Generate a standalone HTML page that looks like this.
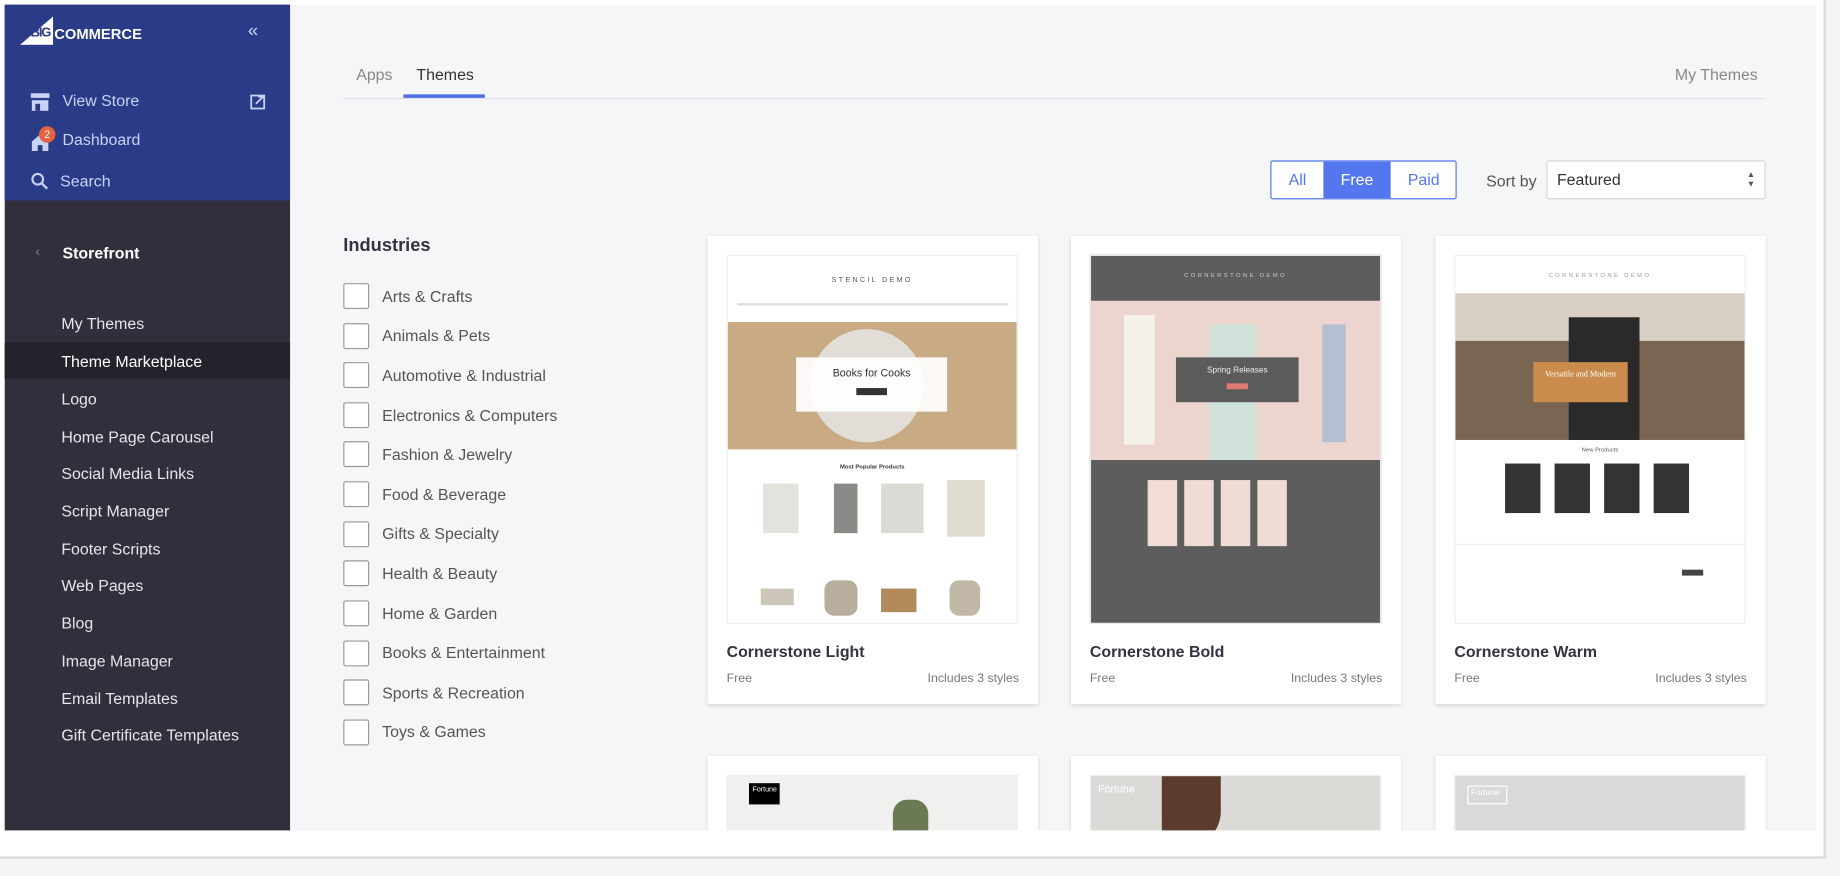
<!DOCTYPE html>
<html><head><meta charset="utf-8"><style>
*{box-sizing:border-box;margin:0;padding:0}
html,body{width:1840px;height:876px;overflow:hidden;background:#f4f4f4;font-family:"Liberation Sans",sans-serif}
#w{position:absolute;left:0;top:0;width:1560px;height:742px;overflow:hidden;transform:scale(1.1795);transform-origin:0 0}
.abs{position:absolute;white-space:nowrap}
#frame{left:0;top:0;width:1548px;height:728px;background:#fff;border-right:2px solid #dcdcdc;border-bottom:2px solid #dcdcdc}
#side{left:4px;top:4px;width:242px;height:700px;background:#302f3b}
#blue{left:4px;top:4px;width:242px;height:166px;background:#2a3b87}
.sn{position:absolute;color:#c9d2f7;font-size:13.5px;white-space:nowrap}
.mi{position:absolute;left:52px;color:#e6e6ec;font-size:13.5px;white-space:nowrap}
#main{left:246px;top:4px;width:1294px;height:700px;background:#f5f6f8;overflow:hidden}
.cb{position:absolute;left:45px;width:22px;height:22px;border:1px solid #9a9a9a;border-radius:2px;background:#fff}
.cl{position:absolute;left:78px;font-size:13.5px;color:#555;white-space:nowrap}
.card{position:absolute;width:280px;height:397px;background:#fff;box-shadow:0 1px 3px rgba(0,0,0,.15)}
.th{position:absolute;left:16px;top:16px;width:247px;height:313px;border:1px solid #eee;overflow:hidden}
.ct{position:absolute;left:16px;top:345px;font-size:13.5px;color:#313440;font-weight:bold;white-space:nowrap}
.cm{position:absolute;top:369px;font-size:10.5px;color:#777;white-space:nowrap}
</style></head><body><div id="w">
<div class="abs" id="frame"></div>
<div class="abs" id="side"></div>
<div class="abs" id="blue"></div>
<svg class="abs" style="left:17px;top:14px" width="34" height="24"><polygon points="0,24 28,0 28,24" fill="#fff"/></svg>
<div class="abs" style="left:26px;top:22px;font-size:11px;font-weight:bold;color:#2a3b87;letter-spacing:-1px">BIG</div>
<div class="abs" style="left:46px;top:22px;font-size:12.5px;color:#fff;font-weight:bold">COMMERCE</div>
<div class="abs" style="left:210px;top:18px;font-size:16px;color:#c9d2f7">«</div>
<svg class="abs" style="left:26px;top:79px" width="16" height="15"><rect x="0" y="0" width="16" height="4" fill="#c9d2f7"/><rect x="1" y="6" width="14" height="9" fill="#c9d2f7"/><rect x="4" y="9" width="4" height="6" fill="#2a3b87"/></svg>
<div class="sn" style="left:53px;top:78px">View Store</div>
<svg class="abs" style="left:212px;top:80px" width="13" height="13"><rect x="1" y="1" width="11" height="11" fill="none" stroke="#c9d2f7" stroke-width="1.5"/><path d="M5 8L11 2M7 2h5v5" stroke="#c9d2f7" stroke-width="1.5" fill="none"/></svg>
<svg class="abs" style="left:26px;top:112px" width="16" height="16"><path d="M1 8L8 2L15 8V16H10V11H6V16H1Z" fill="#c9d2f7"/></svg>
<div class="abs" style="left:33px;top:107px;width:14px;height:14px;border-radius:50%;background:#e4623f;color:#fff;font-size:9px;text-align:center;line-height:14px">2</div>
<div class="sn" style="left:53px;top:111px">Dashboard</div>
<svg class="abs" style="left:26px;top:146px" width="16" height="16"><circle cx="6" cy="6" r="4.5" fill="none" stroke="#c9d2f7" stroke-width="1.8"/><path d="M9.5 9.5L14 14" stroke="#c9d2f7" stroke-width="2"/></svg>
<div class="sn" style="left:51px;top:146px">Search</div>
<div class="abs" style="left:30px;top:206px;color:#888;font-size:12px">‹</div>
<div class="abs" style="left:53px;top:207px;color:#fff;font-size:13.5px;font-weight:bold">Storefront</div>
<div class="abs" style="left:4px;top:290px;width:242px;height:31px;background:#24232c"></div>
<div class="mi" style="top:267px">My Themes</div>
<div class="mi" style="top:299px;color:#fff">Theme Marketplace</div>
<div class="mi" style="top:331px">Logo</div>
<div class="mi" style="top:363px">Home Page Carousel</div>
<div class="mi" style="top:394px">Social Media Links</div>
<div class="mi" style="top:426px">Script Manager</div>
<div class="mi" style="top:458px">Footer Scripts</div>
<div class="mi" style="top:489px">Web Pages</div>
<div class="mi" style="top:521px">Blog</div>
<div class="mi" style="top:553px">Image Manager</div>
<div class="mi" style="top:585px">Email Templates</div>
<div class="mi" style="top:616px">Gift Certificate Templates</div>
<div class="abs" id="main">
<div class="abs" style="left:56px;top:52px;font-size:13.5px;color:#888">Apps</div>
<div class="abs" style="left:107px;top:52px;font-size:13.5px;color:#333">Themes</div>
<div class="abs" style="left:45px;top:79px;width:1206px;height:1px;background:#e1e3e8"></div>
<div class="abs" style="left:96px;top:76px;width:69px;height:3px;background:#4f6fe6"></div>
<div class="abs" style="left:1174px;top:52px;font-size:13.5px;color:#888">My Themes</div>
<div class="abs" style="left:831px;top:132px;width:158px;height:33px;border:1px solid #5477f0;border-radius:2px;background:#fff;overflow:hidden;font-size:13.5px;color:#5477f0">
<div class="abs" style="left:0;top:0;width:44px;height:31px;line-height:31px;text-align:center">All</div>
<div class="abs" style="left:44px;top:0;width:57px;height:31px;line-height:31px;text-align:center;background:#5477f0;color:#fff">Free</div>
<div class="abs" style="left:101px;top:0;width:56px;height:31px;line-height:31px;text-align:center">Paid</div></div>
<div class="abs" style="left:1014px;top:142px;font-size:13.5px;color:#555">Sort by</div>
<div class="abs" style="left:1065px;top:132px;width:186px;height:33px;border:1px solid #d5d7dc;background:#fff;border-radius:2px;font-size:13.5px;color:#333;line-height:31px;padding-left:8px">Featured<span style="position:absolute;right:8px;top:0;font-size:7px;line-height:8px;padding-top:8px;color:#555">▲<br>▼</span></div>
<div class="abs" style="left:45px;top:196px;font-size:15.5px;font-weight:bold;color:#313440">Industries</div>
<div class="cb" style="top:236px"></div><div class="cl" style="top:240px">Arts &amp; Crafts</div>
<div class="cb" style="top:270px"></div><div class="cl" style="top:273px">Animals &amp; Pets</div>
<div class="cb" style="top:303px"></div><div class="cl" style="top:307px">Automotive &amp; Industrial</div>
<div class="cb" style="top:337px"></div><div class="cl" style="top:341px">Electronics &amp; Computers</div>
<div class="cb" style="top:370px"></div><div class="cl" style="top:374px">Fashion &amp; Jewelry</div>
<div class="cb" style="top:404px"></div><div class="cl" style="top:408px">Food &amp; Beverage</div>
<div class="cb" style="top:438px"></div><div class="cl" style="top:441px">Gifts &amp; Specialty</div>
<div class="cb" style="top:471px"></div><div class="cl" style="top:475px">Health &amp; Beauty</div>
<div class="cb" style="top:505px"></div><div class="cl" style="top:509px">Home &amp; Garden</div>
<div class="cb" style="top:539px"></div><div class="cl" style="top:542px">Books &amp; Entertainment</div>
<div class="cb" style="top:572px"></div><div class="cl" style="top:576px">Sports &amp; Recreation</div>
<div class="cb" style="top:606px"></div><div class="cl" style="top:609px">Toys &amp; Games</div>

<div class="card" style="left:354px;top:196px"><div class="th" style="background:#fff">
<div class="abs" style="left:0;top:18px;width:100%;text-align:center;font-size:6px;letter-spacing:2px;color:#555">STENCIL DEMO</div>
<div class="abs" style="left:8px;top:40px;width:230px;height:2px;background:#ddd"></div>
<div class="abs" style="left:0;top:56px;width:100%;height:108px;background:#c8aa85"></div>
<div class="abs" style="left:70px;top:62px;width:96px;height:96px;border-radius:50%;background:#e2ddd6"></div>
<div class="abs" style="left:58px;top:86px;width:128px;height:46px;background:rgba(255,255,255,.92);text-align:center;font-size:9px;color:#333;padding-top:8px">Books for Cooks<div style="margin:8px auto 0;width:26px;height:6px;background:#333"></div></div>
<div class="abs" style="left:0;top:176px;width:100%;text-align:center;font-size:5px;color:#333;font-weight:bold">Most Popular Products</div>
<div class="abs" style="left:30px;top:193px;width:30px;height:42px;background:#e4e2dd"></div>
<div class="abs" style="left:90px;top:193px;width:20px;height:42px;background:#8a8a86"></div>
<div class="abs" style="left:130px;top:193px;width:36px;height:42px;background:#dcdad4"></div>
<div class="abs" style="left:186px;top:190px;width:32px;height:48px;background:#e0ddd0"></div>
<div class="abs" style="left:28px;top:282px;width:28px;height:14px;background:#ccc6b8"></div>
<div class="abs" style="left:82px;top:275px;width:28px;height:30px;background:#b9ae9d;border-radius:8px"></div>
<div class="abs" style="left:130px;top:282px;width:30px;height:20px;background:#b08a5a"></div>
<div class="abs" style="left:188px;top:275px;width:26px;height:30px;background:#c2b8a7;border-radius:8px"></div>
</div><div class="ct">Cornerstone Light</div><div class="cm" style="left:16px">Free</div><div class="cm" style="right:16px">Includes 3 styles</div></div>

<div class="card" style="left:662px;top:196px"><div class="th" style="background:#5d5d5d">
<div class="abs" style="left:0;top:14px;width:100%;text-align:center;font-size:5px;letter-spacing:2px;color:#ccc">CORNERSTONE DEMO</div>
<div class="abs" style="left:0;top:38px;width:100%;height:135px;background:#edd5cf"></div>
<div class="abs" style="left:28px;top:50px;width:26px;height:110px;background:#f4f1ea"></div>
<div class="abs" style="left:100px;top:58px;width:40px;height:115px;background:#cfe1d8"></div>
<div class="abs" style="left:196px;top:58px;width:20px;height:100px;background:#b5bfd2"></div>
<div class="abs" style="left:72px;top:86px;width:104px;height:38px;background:#5b5b5b;text-align:center;color:#eee;font-size:7px;padding-top:8px">Spring Releases<div style="margin:7px auto 0;width:18px;height:5px;background:#e07a72"></div></div>
<div class="abs" style="left:48px;top:190px;width:25px;height:56px;background:#f2ddd6"></div>
<div class="abs" style="left:79px;top:190px;width:25px;height:56px;background:#efdcd5"></div>
<div class="abs" style="left:110px;top:190px;width:25px;height:56px;background:#f0dcd6"></div>
<div class="abs" style="left:141px;top:190px;width:25px;height:56px;background:#efdcd5"></div>
</div><div class="ct">Cornerstone Bold</div><div class="cm" style="left:16px">Free</div><div class="cm" style="right:16px">Includes 3 styles</div></div>

<div class="card" style="left:971px;top:196px"><div class="th" style="background:#fff">
<div class="abs" style="left:0;top:14px;width:100%;text-align:center;font-size:5px;letter-spacing:2px;color:#999">CORNERSTONE DEMO</div>
<div class="abs" style="left:0;top:32px;width:100%;height:124px;background:#7a6452"></div>
<div class="abs" style="left:0;top:32px;width:100%;height:40px;background:#d8d0c4"></div>
<div class="abs" style="left:96px;top:52px;width:60px;height:104px;background:#2b2a2b"></div>
<div class="abs" style="left:66px;top:90px;width:80px;height:34px;background:#c98c4c;color:#fff;font-size:7px;text-align:center;padding-top:6px;font-family:'Liberation Serif',serif">Versatile and Modern</div>
<div class="abs" style="left:0;top:162px;width:100%;text-align:center;font-size:5px;color:#555">New Products</div>
<div class="abs" style="left:42px;top:176px;width:30px;height:42px;background:#333"></div>
<div class="abs" style="left:84px;top:176px;width:30px;height:42px;background:#333"></div>
<div class="abs" style="left:126px;top:176px;width:30px;height:42px;background:#333"></div>
<div class="abs" style="left:168px;top:176px;width:30px;height:42px;background:#333"></div>
<div class="abs" style="left:0;top:244px;width:100%;height:1px;background:#eee"></div>
<div class="abs" style="left:192px;top:266px;width:18px;height:5px;background:#444"></div>
</div><div class="ct">Cornerstone Warm</div><div class="cm" style="left:16px">Free</div><div class="cm" style="right:16px">Includes 3 styles</div></div>

<div class="card" style="left:354px;top:637px"><div class="th" style="background:#f1f0ee"><div class="abs" style="left:18px;top:6px;width:26px;height:18px;background:#000;color:#fff;font-size:6px;padding:3px">Fortune</div><div class="abs" style="left:140px;top:20px;width:30px;height:40px;background:#6b7a55;border-radius:12px"></div></div></div>
<div class="card" style="left:662px;top:637px"><div class="th" style="background:#dcdad6"><div class="abs" style="left:60px;top:0;width:50px;height:60px;background:#5a3b2c;border-radius:0 0 30px 10px"></div><div class="abs" style="left:6px;top:6px;color:#fff;font-size:9px">Fortune</div></div></div>
<div class="card" style="left:971px;top:637px"><div class="th" style="background:#d9d9d7"><div class="abs" style="left:10px;top:8px;width:34px;height:16px;border:1px solid #fff;color:#fff;font-size:7px;padding:2px">Fortune</div></div></div>
</div>
</div></body></html>
